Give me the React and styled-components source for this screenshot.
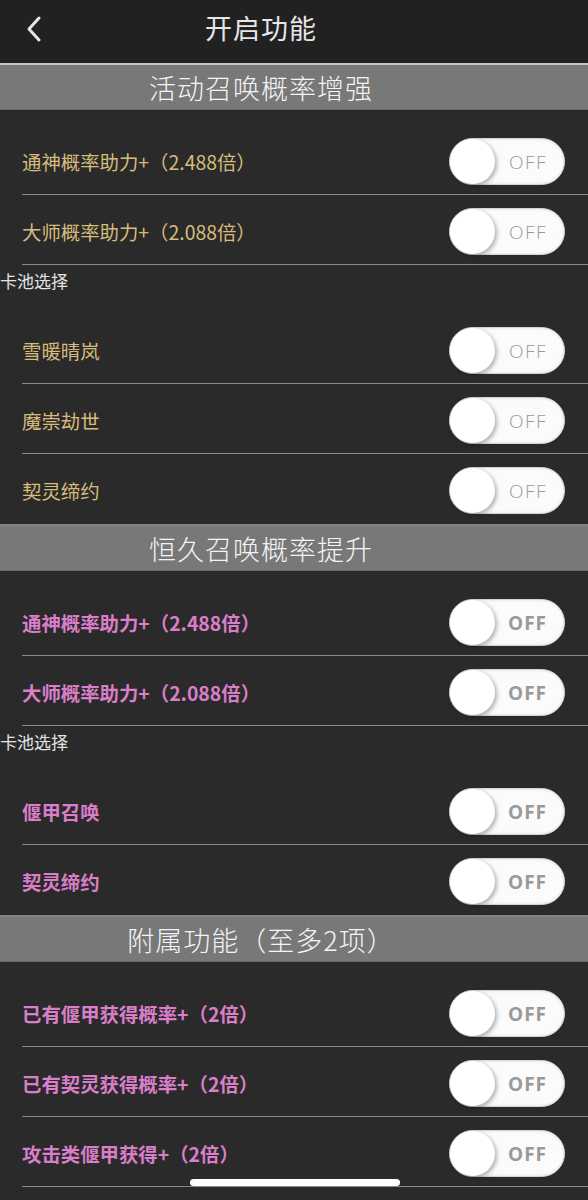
import React from "react";
import styled, { createGlobalStyle } from "styled-components";

const GlobalStyle = createGlobalStyle`
  html, body {
    margin: 0;
    padding: 0;
    background: #2b2a2b;
  }
  body {
    font-family: "Noto Sans CJK SC", "Noto Sans", sans-serif;
  }
`;

const sections = [
  {
    title: "活动召唤概率增强",
    tone: "gold",
    boost: ["通神概率助力+（2.488倍）", "大师概率助力+（2.088倍）"],
    pools: ["雪暖晴岚", "魔崇劫世", "契灵缔约"],
  },
  {
    title: "恒久召唤概率提升",
    tone: "pink",
    boost: ["通神概率助力+（2.488倍）", "大师概率助力+（2.088倍）"],
    pools: ["偃甲召唤", "契灵缔约"],
  },
  {
    title: "附属功能（至多2项）",
    tone: "pink",
    boost: [
      "已有偃甲获得概率+（2倍）",
      "已有契灵获得概率+（2倍）",
      "攻击类偃甲获得+（2倍）",
    ],
    divideLast: true,
  },
];

const Page = styled.div`
  width: 588px;
  min-height: 1200px;
  background: #2b2a2b;
  position: relative;
  overflow: hidden;
`;

const NavBar = styled.div`
  height: 63px;
  background: #222122;
  display: flex;
  align-items: center;
  justify-content: center;
  padding-right: 66px;
  position: relative;
`;

const BackButton = styled.button`
  position: absolute;
  left: 20px;
  top: 14px;
  width: 28px;
  height: 30px;
  padding: 0;
  background: none;
  border: none;
  display: flex;
  align-items: center;
  justify-content: center;
`;

const NavTitle = styled.h1`
  margin: 0;
  margin-top: -8px;
  font-size: 27px;
  font-weight: 400;
  color: #e6e6e6;
  letter-spacing: 1px;
`;

const SectionHeader = styled.div`
  height: 47px;
  box-sizing: border-box;
  background: #787878;
  display: flex;
  align-items: center;
  justify-content: center;
  padding-right: 66px;
  color: #f4f4f4;
  font-size: 27px;
  font-weight: 300;
  letter-spacing: 1px;
  border-top: 2px solid ${(p) => (p.$first ? "#c6c6c6" : "#838383")};
  border-bottom: 1px solid #6a6a6a;
`;

const Rows = styled.div`
  padding-top: 15px;
`;

const Row = styled.div`
  height: 70px;
  box-sizing: border-box;
  padding-top: 4px;
  display: flex;
  align-items: center;
  justify-content: space-between;
  margin-left: 22px;
  padding-right: 23px;
  border-bottom: ${(p) => (p.$divider ? "1px solid #8a8a8a" : "1px solid transparent")};
`;

const RowLabel = styled.span`
  font-size: 19.4px;
  font-weight: ${(p) => (p.$tone === "pink" ? 700 : 400)};
  color: ${(p) => (p.$tone === "pink" ? "#d97ec8" : "#d6bc7a")};
`;

const PoolLabel = styled.div`
  height: 49px;
  box-sizing: border-box;
  padding-top: 3px;
  font-size: 17px;
  color: #e2e2e2;
`;

const Track = styled.div`
  width: 116px;
  height: 47px;
  box-sizing: border-box;
  border-radius: 24px;
  background: #fbfbfb;
  border: 1px solid #d4d4d4;
  box-shadow: inset 0 0 3px rgba(0, 0, 0, 0.12);
  position: relative;
  display: flex;
  align-items: center;
  justify-content: flex-end;
  padding-right: 17px;
`;

const Knob = styled.div`
  position: absolute;
  left: 0;
  top: 0;
  width: 45px;
  height: 45px;
  border-radius: 50%;
  background: #ffffff;
  box-shadow: 2px 2px 4px rgba(0, 0, 0, 0.3);
`;

const OffText = styled.span`
  font-family: "Open Sans", "Liberation Sans", sans-serif;
  font-size: 19px;
  font-weight: ${(p) => (p.$bold ? 700 : 300)};
  color: #9a9a9a;
  letter-spacing: ${(p) => (p.$bold ? "1px" : "1.5px")};
`;

const HomeIndicator = styled.div`
  position: absolute;
  left: 190px;
  top: 1179px;
  width: 210px;
  height: 7px;
  border-radius: 4px;
  background: #ffffff;
`;

const Toggle = ({ bold }) => (
  <Track>
    <Knob />
    <OffText $bold={bold}>OFF</OffText>
  </Track>
);

const Section = ({ section, first }) => {
  const { title, tone, boost, pools, divideLast } = section;
  return (
    <>
      <SectionHeader $first={first}>{title}</SectionHeader>
      <Rows>
        {boost.map((label, i) => (
          <Row key={label} $divider={pools || divideLast || i < boost.length - 1}>
            <RowLabel $tone={tone}>{label}</RowLabel>
            <Toggle bold={tone === "pink"} />
          </Row>
        ))}
      </Rows>
      {pools && (
        <>
          <PoolLabel>卡池选择</PoolLabel>
          {pools.map((label, i) => (
            <Row key={label} $divider={i < pools.length - 1}>
              <RowLabel $tone={tone}>{label}</RowLabel>
              <Toggle bold={tone === "pink"} />
            </Row>
          ))}
        </>
      )}
    </>
  );
};

export default function App() {
  return (
    <Page>
      <GlobalStyle />
      <NavBar>
        <BackButton aria-label="返回">
          <svg width="16" height="26" viewBox="0 0 16 26">
            <path d="M13 2 L3 13 L13 24" fill="none" stroke="#e6e6e6" strokeWidth="3" strokeLinecap="round" strokeLinejoin="round" />
          </svg>
        </BackButton>
        <NavTitle>开启功能</NavTitle>
      </NavBar>
      {sections.map((s, i) => (
        <Section key={s.title} section={s} first={i === 0} />
      ))}
      <HomeIndicator />
    </Page>
  );
}
